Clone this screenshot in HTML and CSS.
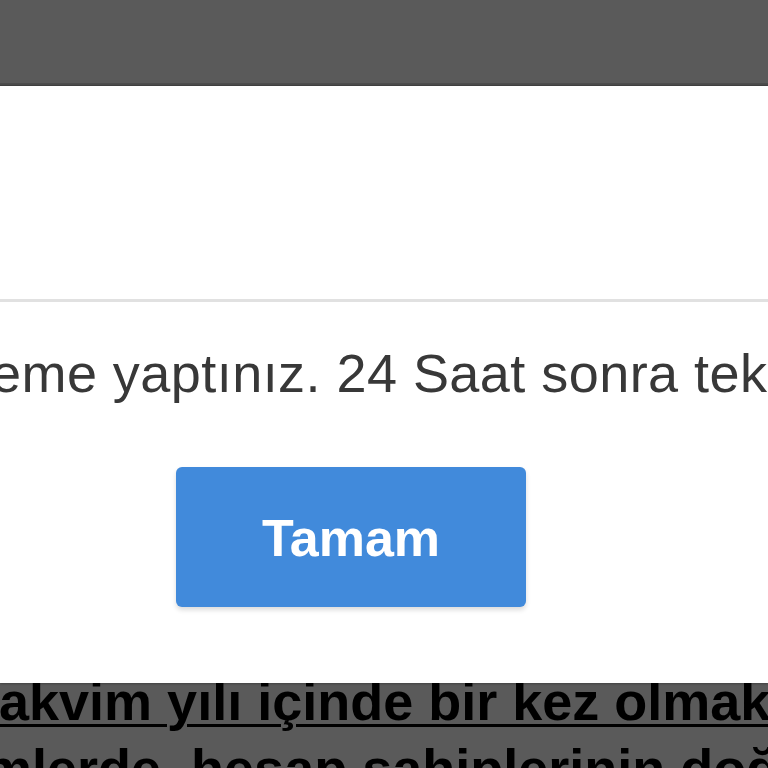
FILE: index.html
```html
<!DOCTYPE html>
<html lang="tr">
<head>
<meta charset="utf-8">
<title>Uyarı</title>
<link rel="stylesheet" href="styles.css">
</head>
<body>
<div class="screen">
  <div class="backdrop-top"></div>
  <div class="dialog">
    <div class="dialog-header"></div>
    <div class="dialog-divider"></div>
    <div class="dialog-content">
      <p class="message">eme yaptınız. 24 Saat sonra tek</p>
    </div>
    <div class="dialog-actions">
      <button class="btn-confirm" type="button">Tamam</button>
    </div>
  </div>
  <div class="page-text">
    <p class="line line-first"><u>akvim yılı içinde bir kez olmak</u></p>
    <p class="line line-second">mlerde, hesap sahiplerinin doğ</p>
  </div>
</div>
</body>
</html>
```
FILE: styles.css
```css
html, body {
  margin: 0;
  padding: 0;
  width: 768px;
  height: 768px;
  overflow: hidden;
  background: #5a5a5a;
  font-family: "Liberation Sans", Arial, sans-serif;
}

.screen {
  width: 768px;
  height: 768px;
  overflow: hidden;
  display: flex;
  flex-direction: column;
}

.backdrop-top {
  flex: 0 0 auto;
  height: 83px;
  background: #5a5a5a;
  border-bottom: 3px solid #4c4c4c;
}

.dialog {
  flex: 0 0 auto;
  position: relative;
  z-index: 1;
  height: 597px;
  background: #ffffff;
  display: flex;
  flex-direction: column;
  box-shadow: 0 1px 2px rgba(0, 0, 0, 0.25), 0 -1px 1px rgba(0, 0, 0, 0.15);
}

.dialog-header {
  height: 213px;
}

.dialog-divider {
  height: 3px;
  background: #e1e1e1;
}

.dialog-content {
  padding-top: 39px;
  overflow: hidden;
}

.message {
  margin: 0 0 0 -9px;
  white-space: nowrap;
  font-size: 54px;
  letter-spacing: 0.45px;
  line-height: 65px;
  color: #383838;
}

.dialog-actions {
  padding-top: 61px;
  padding-left: 176px;
}

.btn-confirm {
  width: 350px;
  height: 140px;
  border: 0;
  border-radius: 6px;
  background: #418adb;
  color: #ffffff;
  font-family: "Liberation Sans", Arial, sans-serif;
  font-weight: bold;
  font-size: 52px;
  padding: 2px 0 0 0;
  box-shadow: 0 3px 5px rgba(0, 0, 0, 0.14);
}

.page-text {
  margin-top: -12px;
  overflow: hidden;
  color: #000000;
}

.line {
  margin: 0;
  white-space: nowrap;
  font-size: 54px;
  font-weight: bold;
  line-height: 61px;
}

.line-first {
  margin-left: -1px;
}

.line-second {
  margin-top: 6px;
  margin-left: -16px;
}

.line-first u {
  text-decoration-thickness: 3px;
  text-underline-offset: 4px;
}
```
